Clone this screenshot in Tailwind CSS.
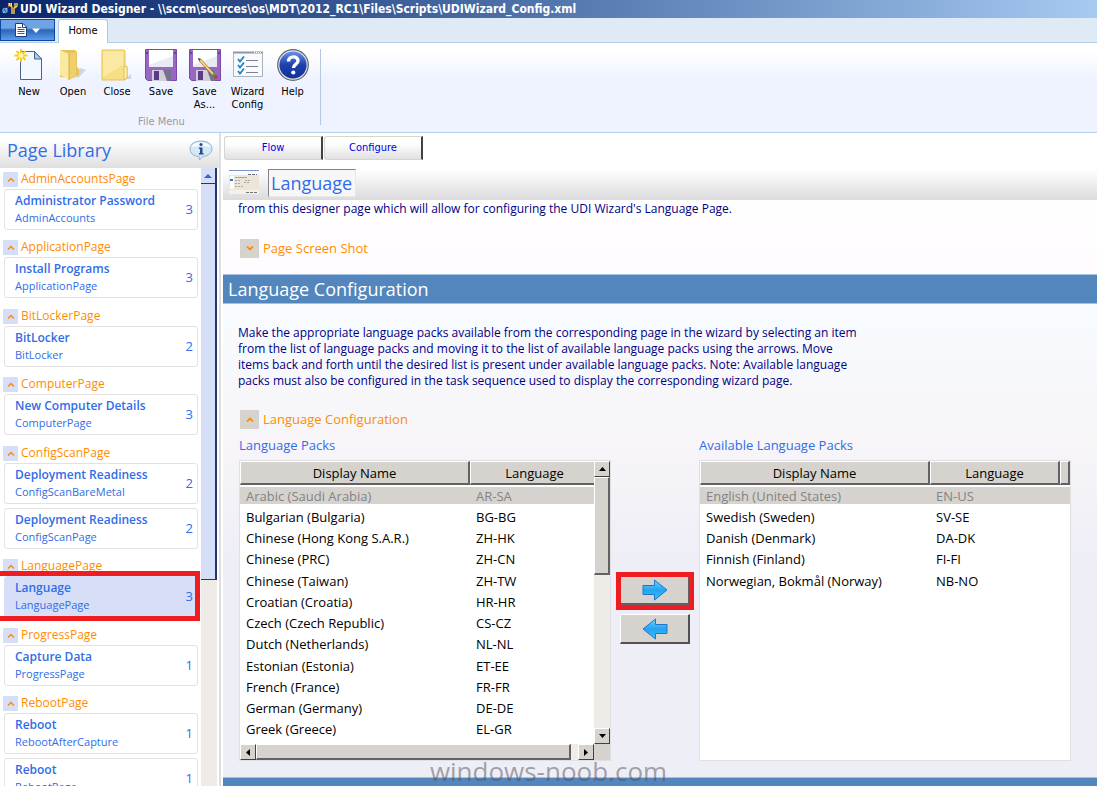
<!DOCTYPE html>
<html lang="en">
<head>
<meta charset="utf-8">
<title>UDI Wizard Designer</title>
<script src="https://cdn.jsdelivr.net/npm/@tailwindcss/browser@4"></script>
</head>
<body class="h-screen overflow-hidden flex flex-col bg-white font-['Open_Sans','Noto_Sans',sans-serif] text-xs text-black">

<header class="shrink-0 font-['DejaVu_Sans_Condensed','DejaVu_Sans',sans-serif] text-[11px]">
  <div class="h-[18px] flex items-center gap-[2px] pl-[2px] bg-linear-to-r from-[#0a246a] to-[#a6caf0] text-white font-bold">
    <svg class="w-4 h-4 shrink-0" viewBox="0 0 16 16">
      <circle cx="3" cy="9.500" r="2" fill="none" stroke="#5aa7e8" stroke-width="1.500"/><path d="M1 12l4-5" stroke="#9fd0ff"/><path d="M5 8l2-3" stroke="#d33"/>
      <path d="M9 2v3l1 1v7M7 2v3M13 2v4l-1 1v6M15 2v3l-2 2" fill="none" stroke="#f2c14a" stroke-width="1.500"/><path d="M7.500 2v3h2V2" fill="none" stroke="#f8e6b0"/>
    </svg>
    <h1 class="text-xs leading-4 whitespace-nowrap">UDI Wizard Designer - \\sccm\sources\os\MDT\2012_RC1\Files\Scripts\UDIWizard_Config.xml</h1>
  </div>
  <div class="h-[25px] flex items-end bg-[#deebf7] border-b border-[#b7cde4]">
    <button aria-label="Application menu" class="self-start mt-px w-[55px] h-[22px] flex items-center justify-center gap-[5px] border border-[#0a47a5] bg-linear-to-b from-[#6fa3e3] from-40% via-[#2b66b9] via-50% to-[#5d9be8]">
      <svg class="w-3 h-[14px]" viewBox="0 0 12 14"><path d="M.5.5h7.500l3.500 3.500v9.500H.5z" fill="#fff" stroke="#123f86"/><path d="M7.500.5v4h4" fill="none" stroke="#123f86"/><path d="M2.500 4.500h4M2.500 6.500h7M2.500 8.500h7M2.500 10.500h7" stroke="#2d5ea8"/></svg>
      <svg class="w-2 h-[5px]" viewBox="0 0 8 5"><path d="M0 .5h8L4 5z" fill="#fff"/></svg>
    </button>
    <button class="ml-[3px] -mb-px w-[50px] h-6 border border-b-0 border-[#b3c9e2] rounded-t-[3px] bg-white text-center">Home</button>
  </div>
  <div class="h-[90px] flex bg-linear-to-b from-white from-10% via-[#eff3ff] via-40% to-[#eff3ff] border-b border-[#b7cfe7]">
    <div class="mt-[6px] mb-[7px] pl-[7px] w-[321px] flex flex-col justify-between border-r border-[#b3c9e2]">
      <div id="tools" class="flex items-start">
        <button class="w-11 flex flex-col items-center gap-1 leading-[13px]">
          <svg class="w-8 h-8" viewBox="0 0 32 32"><path d="M7.500 2.500h14l7 7.500v20.500h-21z" fill="#f2f8ff" stroke="#4c6288"/><path d="M21.500 2.500v7.500h7z" fill="#9fd0f5" stroke="#4c6288"/><path d="M8 0v13M1.500 6.500h13M3.500 2l9 9M12.500 2l-9 9" stroke="#fbc916" stroke-width="2"/><circle cx="8" cy="6.500" r="2.500" fill="#fff7b0"/></svg>
          New</button>
        <button class="w-11 flex flex-col items-center gap-1 leading-[13px]">
          <svg class="w-8 h-8" viewBox="0 0 32 32"><path d="M17 27l6-8 6 2-8 8z" fill="#b9c0d4" opacity=".6"/><path d="M3 1h15l2 2v15l2 2v6l-6 3-13-1z" fill="#e6c35c"/><path d="M3 1l9 4v26l-9-5z" fill="#fbe9a0"/><path d="M12 5l7-2v25l-7 3z" fill="#efcf6c"/><path d="M12 5v26" stroke="#d6ad3d"/></svg>
          Open</button>
        <button class="w-11 flex flex-col items-center gap-1 leading-[13px]">
          <svg class="w-8 h-8" viewBox="0 0 32 32"><path d="M24 30l6-5v5z" fill="#b9c0d4" opacity=".6"/><path d="M1 1h22l1 1v15l2 1v11l-2 2H1z" fill="#f6df85" stroke="#e3c35f"/><path d="M2 2h20v14L2 28z" fill="#fbe9a3"/><path d="M23 17.500h3V29l-3 1.500z" fill="#fff0b8" stroke="#dcb64b" stroke-width=".8"/></svg>
          Close</button>
        <button class="w-11 flex flex-col items-center gap-1 leading-[13px]">
          <svg class="w-8 h-8" viewBox="0 0 32 32"><path d="M.5.500h31v31h-29l-2-2z" fill="#9a66c4" stroke="#7a4aa8"/><path d="M4 1h24v17H4z" fill="#e8ebf5"/><path d="M4 1h24v6L4 16z" fill="#fff"/><path d="M7 21h19v11H7z" fill="#cfcfd8"/><path d="M9 22h5v9H9z" fill="#5b3a86"/><path d="M18 21h8v11h-4z" fill="#77718c"/><path d="M1 4h2M29 4h2" stroke="#3b1c62"/></svg>
          Save</button>
        <button class="w-[43px] flex flex-col items-center gap-1 leading-[13px]">
          <svg class="w-8 h-8" viewBox="0 0 32 32"><path d="M.5.500h31v31h-29l-2-2z" fill="#9a66c4" stroke="#7a4aa8"/><path d="M4 1h24v17H4z" fill="#e8ebf5"/><path d="M4 1h24v6L4 16z" fill="#fff"/><path d="M7 21h19v11H7z" fill="#cfcfd8"/><path d="M9 22h5v9H9z" fill="#5b3a86"/><path d="M18 21h8v11h-4z" fill="#77718c"/><path d="M1 4h2M29 4h2" stroke="#3b1c62"/><path d="M11 11l14 15" stroke="#b07a24" stroke-width="3"/><path d="M11 11l14 15" stroke="#ffd98a" stroke-width="1.800"/><path d="M9 9l3 1-2 2z" fill="#333"/><path d="M24 25l2 2" stroke="#4b9a4b" stroke-width="3"/><path d="M26 27l2 2" stroke="#c33" stroke-width="3"/></svg>
          <span>Save<br>As...</span></button>
        <button class="w-[43px] flex flex-col items-center gap-1 leading-[13px]">
          <svg class="w-8 h-8" viewBox="0 0 32 32"><path d="M1.500 3.500h29v24h-29z" fill="#f8fafc" stroke="#aab2bc"/><path d="M1 3.500h30" stroke="#8d98a4" stroke-width="2"/><path d="M22 3.500h7" stroke="#fff" stroke-dasharray="1 1"/><path d="M14 11.500h12M14 17.500h12M14 23.500h12" stroke="#7b7f9c"/><path d="M6 10l2 2.500 4-5M6 16l2 2.500 4-5M6 22l2 2.500 4-5" fill="none" stroke="#1a86c4" stroke-width="1.800"/></svg>
          <span>Wizard<br>Config</span></button>
        <button class="w-[47px] flex flex-col items-center gap-1 leading-[13px]">
          <svg class="w-8 h-8" viewBox="0 0 32 32"><defs><linearGradient id="hb" x2="0" y2="1"><stop stop-color="#6b93e6"/><stop offset=".5" stop-color="#1c3fae"/><stop offset="1" stop-color="#16309a"/></linearGradient></defs><circle cx="16" cy="16" r="15.300" fill="#dfe3ea" stroke="#5c6472" stroke-width="1.200"/><circle cx="16" cy="16" r="13.600" fill="url(#hb)"/><path d="M11.500 12.500c0-6 9.500-6 9.500-.8 0 3.800-4.600 3.600-4.600 7.300" fill="none" stroke="#fff" stroke-width="3.400"/><circle cx="16.300" cy="23.500" r="2.100" fill="#fff"/></svg>
          Help</button>
      </div>
      <p class="text-center pr-1 leading-3 text-[#9c9a9c] mb-[-3px]">File Menu</p>
    </div>
  </div>
</header>

<div class="flex-1 min-h-0 flex">
  <aside class="w-[221px] shrink-0 flex flex-col border-r-2 border-[#dedede]">
    <div class="h-[35px] shrink-0 flex items-center justify-between pl-[7px] pr-[6px] pb-[2px] bg-linear-to-b from-white from-20% to-[#dfdfe1]">
      <h2 class="text-lg leading-6 text-[#316de7]">Page Library</h2>
      <svg class="w-6 h-5" viewBox="0 0 24 20"><path d="M12 1c6 0 11 3 11 7.500S19 16 14 16.500L10.500 20l-.5-3.500C4 16 1 13 1 8.500S6 1 12 1z" fill="#d5e8f5" stroke="#8fb3cc"/><path d="M12 2.500c5 0 9 1.500 9.500 5-5-2-14-2-19 0C3 4 7 2.500 12 2.500z" fill="#fff" opacity=".8"/><circle cx="12" cy="4.500" r="1.600" fill="#2a4a94"/><path d="M10 7.500h3.500v5.500h1v1.500h-4.500v-1.500h1V9h-1z" fill="#2a4a94"/></svg>
    </div>
    <div class="flex-1 min-h-0 flex pr-[2px]">
      <nav id="library" class="flex-1 min-w-0 overflow-hidden px-[3px] pt-[3px]"></nav>
      <div class="w-4 shrink-0 bg-[#efebe7]">
        <button aria-label="Scroll up" class="w-full h-4 flex items-center justify-center bg-[#d6dff7] border-r-2 border-b border-[#21386b]"><svg class="w-2 h-1" viewBox="0 0 8 4"><path d="M0 4h8L4 0z" fill="#2f62e0"/></svg></button>
        <div class="h-[396px] bg-[#d6dff7] border-r-2 border-b border-[#21386b]"></div>
      </div>
    </div>
  </aside>

  <main class="flex-1 min-w-0 flex flex-col pl-[2px] pt-[3px]">
    <div class="flex gap-px pl-px shrink-0 text-[11px] text-[#0000e7] font-['DejaVu_Sans_Condensed','DejaVu_Sans',sans-serif]">
      <button class="w-[99px] h-6 rounded-l-[3px] border border-[#d8d4d0] border-r-2 border-r-[#424142] bg-linear-to-b from-white from-30% to-[#e2e0e2]">Flow</button>
      <button class="w-[99px] h-6 rounded-l-[3px] border border-[#d8d4d0] border-r-2 border-r-[#424142] bg-linear-to-b from-white from-30% to-[#e2e0e2]">Configure</button>
    </div>
    <div class="h-10 shrink-0 flex items-end gap-[9px] pl-[6px] pb-1 bg-linear-to-b from-white from-25% to-[#dbdbdd]">
      <svg class="w-[30px] h-6 mb-[2px]" viewBox="0 0 30 24"><path d="M0 0h30v24H0z" fill="#ebe6d6"/><path d="M0 0h30v5H0z" fill="#fafbff"/><path d="M0 .5h30" stroke="#7d93c4"/><path d="M0 20h30v4H0z" fill="#f3f1ea"/><path d="M19 4.500h9" stroke="#445" stroke-dasharray="3 1" stroke-width=".8"/><path d="M1 6h4v13H1z" fill="#fff"/><path d="M1 10h3" stroke="#3f6ec2" stroke-width="2"/><path d="M6 7.500h12" stroke="#c7a65a"/><path d="M6 10.500h6M16 10.500h5M6 13.500h5M15 12.500h6M6 16.500h8" stroke="#99a" stroke-dasharray="2 1" stroke-width=".8"/><path d="M17 22.500h11" stroke="#555" stroke-dasharray="3 1" stroke-width=".8"/></svg>
      <input aria-label="Page name" value="Language" class="w-[88px] h-7 px-[2px] text-lg text-[#316de7] bg-[#f7f7f7] border border-[#848284] border-r-[#e8e8e8] border-b-[#e8e8e8] -mb-px">
    </div>

    <div class="flex-1 min-h-0 flex flex-col overflow-hidden">
      <section class="h-[74px] shrink-0 pl-[15px] bg-linear-to-b from-white to-[#fffbff]">
        <p class="pt-px leading-4 text-[#000084]">from this designer page which will allow for configuring the UDI Wizard's Language Page.</p>
        <div class="mt-[21px] flex items-center gap-1 pl-[2px]">
          <button aria-label="Expand Page Screen Shot" class="w-[19px] h-[19px] flex items-center justify-center bg-[#d6d3ce]"><svg class="w-2 h-[5px]" viewBox="0 0 8 5"><path d="M1 .5l3 3 3-3" fill="none" stroke="#ff8c00" stroke-width="1.800"/></svg></button>
          <h3 class="text-[13px] leading-5 text-[#ff8c00]">Page Screen Shot</h3>
        </div>
      </section>

      <h2 class="h-[30px] shrink-0 pl-[5px] flex items-center border-y border-[#a5c3e0] bg-[#5286bd] text-lg leading-7 text-white">Language Configuration</h2>

      <section class="flex-1 min-h-0 pl-[15px] pt-[21px] bg-linear-to-b from-[#f7fbff] via-[#f7f5f8] via-30% to-[#eeeef7] to-55%">
        <p class="leading-4 whitespace-nowrap text-[#000084]">Make the appropriate language packs available from the corresponding page in the wizard by selecting an item<br>from the list of language packs and moving it to the list of available language packs using the arrows. Move<br>items back and forth until the desired list is present under available language packs. Note: Available language<br>packs must also be configured in the task sequence used to display the corresponding wizard page.</p>
        <div class="mt-5 flex items-center gap-1 pl-[2px]">
          <button aria-label="Collapse Language Configuration" class="w-[19px] h-[19px] flex items-center justify-center bg-[#d6d3ce]"><svg class="w-2 h-[5px]" viewBox="0 0 8 5"><path d="M1 4.500l3-3 3 3" fill="none" stroke="#ff8c00" stroke-width="1.800"/></svg></button>
          <h3 class="text-[13px] leading-5 text-[#ff8c00]">Language Configuration</h3>
        </div>

        <div class="mt-[7px] pl-px flex">
          <div class="w-[372px]">
            <h4 class="text-[13px] leading-[18px] text-[#316de7] mb-[6px]">Language Packs</h4>
            <div class="h-[301px] flex flex-col bg-white border border-[#e0e0e4]">
              <div class="flex-1 min-h-0 flex">
                <div class="flex-1 min-w-0 overflow-hidden">
                  <table class="w-[360px] table-fixed border-separate border-spacing-0 text-left text-[13px] leading-4">
                    <colgroup><col class="w-[230px]"><col class="w-[130px]"></colgroup>
                    <thead><tr>
                      <th class="h-6 p-0 font-normal text-center bg-[#d6d3ce] border border-white border-r-2 border-b-2 border-r-[#636163] border-b-[#636163]">Display Name</th>
                      <th class="h-6 p-0 font-normal text-center bg-[#d6d3ce] border border-white border-r-2 border-b-2 border-r-[#636163] border-b-[#636163]">Language</th>
                    </tr></thead>
                    <tbody id="packs"></tbody>
                  </table>
                </div>
                <div class="w-4 shrink-0 flex flex-col bg-[#efebe7]">
                  <button aria-label="Scroll up" class="h-4 flex items-center justify-center bg-[#d6d3ce] border border-white border-r-[#424142] border-b-[#424142]"><svg class="w-[7px] h-1" viewBox="0 0 7 4"><path d="M0 4h7L3.500 0z"/></svg></button>
                  <div class="h-[98px] bg-[#d6d3ce] border border-white border-r-2 border-b-2 border-r-[#636163] border-b-[#636163]"></div>
                  <div class="flex-1"></div>
                  <button aria-label="Scroll down" class="h-4 flex items-center justify-center bg-[#d6d3ce] border border-white border-r-[#424142] border-b-[#424142]"><svg class="w-[7px] h-1" viewBox="0 0 7 4"><path d="M0 0h7L3.500 4z"/></svg></button>
                </div>
              </div>
              <div class="h-4 shrink-0 flex bg-[#efebe7]">
                <button aria-label="Scroll left" class="w-4 flex items-center justify-center bg-[#d6d3ce] border border-white border-r-[#424142] border-b-[#424142]"><svg class="w-1 h-[7px]" viewBox="0 0 4 7"><path d="M4 0v7L0 3.500z"/></svg></button>
                <div class="w-[315px] bg-[#d6d3ce] border border-white border-r-2 border-b-2 border-r-[#636163] border-b-[#636163]"></div>
                <div class="flex-1"></div>
                <button aria-label="Scroll right" class="w-4 flex items-center justify-center bg-[#d6d3ce] border border-white border-r-[#424142] border-b-[#424142]"><svg class="w-1 h-[7px]" viewBox="0 0 4 7"><path d="M0 0v7l4-3.500z"/></svg></button>
                <div class="w-4 bg-[#d6d3ce]"></div>
              </div>
            </div>
          </div>

          <div class="w-[88px] pt-[136px] pl-[5px] flex flex-col gap-1">
            <div class="w-[78px] border-[5px] border-[#ef1c21]">
              <button aria-label="Add language pack" class="w-full h-[28px] flex items-center justify-center bg-[#d6d3ce] border-r border-b-2 border-[#636163]">
                <svg class="w-[26px] h-[22px]" viewBox="0 0 26 22"><defs><linearGradient id="ab" x2="0" y2="1"><stop stop-color="#6fd0ff"/><stop offset=".5" stop-color="#22a4f2"/><stop offset="1" stop-color="#3cc0ff"/></linearGradient></defs><path d="M1 6.500h11.500V1L25 11 12.500 21v-5.500H1z" fill="url(#ab)" stroke="#1e78c8"/></svg></button>
            </div>
            <button aria-label="Remove language pack" class="ml-1 w-[70px] h-[30px] flex items-center justify-center bg-[#d6d3ce] border border-white border-r-2 border-b-2 border-r-[#525052] border-b-[#525052]">
              <svg class="w-[26px] h-[22px]" viewBox="0 0 26 22"><path d="M25 6.500H13.500V1L1 11l12.500 10v-5.500H25z" fill="url(#ab)" stroke="#1e78c8"/></svg></button>
          </div>

          <div class="w-[372px]">
            <h4 class="text-[13px] leading-[18px] text-[#316de7] mb-[6px]">Available Language Packs</h4>
            <div class="h-[301px] bg-white border border-[#e0e0e4] overflow-hidden">
              <table class="w-full table-fixed border-separate border-spacing-0 text-left text-[13px] leading-4">
                <colgroup><col class="w-[230px]"><col class="w-[130px]"><col></colgroup>
                <thead><tr>
                  <th class="h-6 p-0 font-normal text-center bg-[#d6d3ce] border border-white border-r-2 border-b-2 border-r-[#636163] border-b-[#636163]">Display Name</th>
                  <th class="h-6 p-0 font-normal text-center bg-[#d6d3ce] border border-white border-r-2 border-b-2 border-r-[#636163] border-b-[#636163]">Language</th>
                  <td class="h-6 p-0 bg-[#d6d3ce] border border-white border-r-2 border-b-2 border-r-[#636163] border-b-[#636163]"></td>
                </tr></thead>
                <tbody id="available"></tbody>
              </table>
            </div>
          </div>
        </div>
      </section>
      <div class="h-[9px] shrink-0 bg-[#5286bd] border-t border-[#a5c3e0]"></div>
    </div>
  </main>
</div>

<div class="absolute bottom-0 inset-x-0 text-center text-[26px] leading-[30px] text-[#505058]/50 pointer-events-none">windows-noob.com</div>

<script>
  const groups = [
    ['AdminAccountsPage', [['Administrator Password', 'AdminAccounts', 3]]],
    ['ApplicationPage', [['Install Programs', 'ApplicationPage', 3]]],
    ['BitLockerPage', [['BitLocker', 'BitLocker', 2]]],
    ['ComputerPage', [['New Computer Details', 'ComputerPage', 3]]],
    ['ConfigScanPage', [['Deployment Readiness', 'ConfigScanBareMetal', 2], ['Deployment Readiness', 'ConfigScanPage', 2]]],
    ['LanguagePage', [['Language', 'LanguagePage', 3]]],
    ['ProgressPage', [['Capture Data', 'ProgressPage', 1]]],
    ['RebootPage', [['Reboot', 'RebootAfterCapture', 1], ['Reboot', 'RebootPage', 1]]],
  ];
  const card = ([title, name, count]) => {
    const on = title === 'Language';
    return `<div class="relative mb-1 ml-px">
      <button class="${on ? 'bg-[#d6dff7] border-[#d6dff7]' : 'bg-white border-[#e3e1e3]'} w-full h-[41px] flex items-center justify-between text-left pl-[10px] pr-1 pb-px border rounded-[3px] text-[#316de7]">
        <span class="flex flex-col"><b class="leading-[18px] font-semibold">${title}</b><span class="text-[11px] leading-4">${name}</span></span>
        <span class="text-[13px] leading-4">${count}</span>
      </button>
      ${on ? '<div class="absolute -top-[5px] -left-[9px] -right-[2px] -bottom-1 border-[5px] border-[#ef1c21] pointer-events-none"></div>' : ''}
    </div>`;
  };
  document.getElementById('library').innerHTML = groups.map(([name, cards]) =>
    `<section class="pb-[5px] even:pb-[6px]">
      <h3 class="mb-[2px] flex items-center gap-[3px] text-xs leading-4 text-[#ff8c00]">
        <button aria-label="Collapse ${name}" class="w-[15px] h-[15px] flex items-center justify-center bg-[#d6dff7]"><svg class="w-2 h-[5px]" viewBox="0 0 8 5"><path d="M1 4.500l3-3 3 3" fill="none" stroke="#ff8c00" stroke-width="1.500"/></svg></button>${name}
      </h3>${cards.map(card).join('')}
    </section>`).join('');

  const rows = (list, extra) => list.map(([name, code], i) =>
    `<tr class="${i ? '' : 'text-[#848284]'} h-[21px] nth-[4n]:h-[22px]">${[name, code, ...extra].map(t =>
      `<td class="${i ? '' : 'bg-[#d6d3ce]'} bg-clip-padding py-0 pl-[6px] pr-0 border-y-2 border-transparent whitespace-nowrap">${t}</td>`).join('')}</tr>`).join('');
  document.getElementById('packs').innerHTML = rows([
    ['Arabic (Saudi Arabia)', 'AR-SA'], ['Bulgarian (Bulgaria)', 'BG-BG'], ['Chinese (Hong Kong S.A.R.)', 'ZH-HK'],
    ['Chinese (PRC)', 'ZH-CN'], ['Chinese (Taiwan)', 'ZH-TW'], ['Croatian (Croatia)', 'HR-HR'],
    ['Czech (Czech Republic)', 'CS-CZ'], ['Dutch (Netherlands)', 'NL-NL'], ['Estonian (Estonia)', 'ET-EE'],
    ['French (France)', 'FR-FR'], ['German (Germany)', 'DE-DE'], ['Greek (Greece)', 'EL-GR']], []);
  document.getElementById('available').innerHTML = rows([
    ['English (United States)', 'EN-US'], ['Swedish (Sweden)', 'SV-SE'], ['Danish (Denmark)', 'DA-DK'],
    ['Finnish (Finland)', 'FI-FI'], ['Norwegian, Bokmål (Norway)', 'NB-NO']], ['']);
</script>
</body>
</html>
